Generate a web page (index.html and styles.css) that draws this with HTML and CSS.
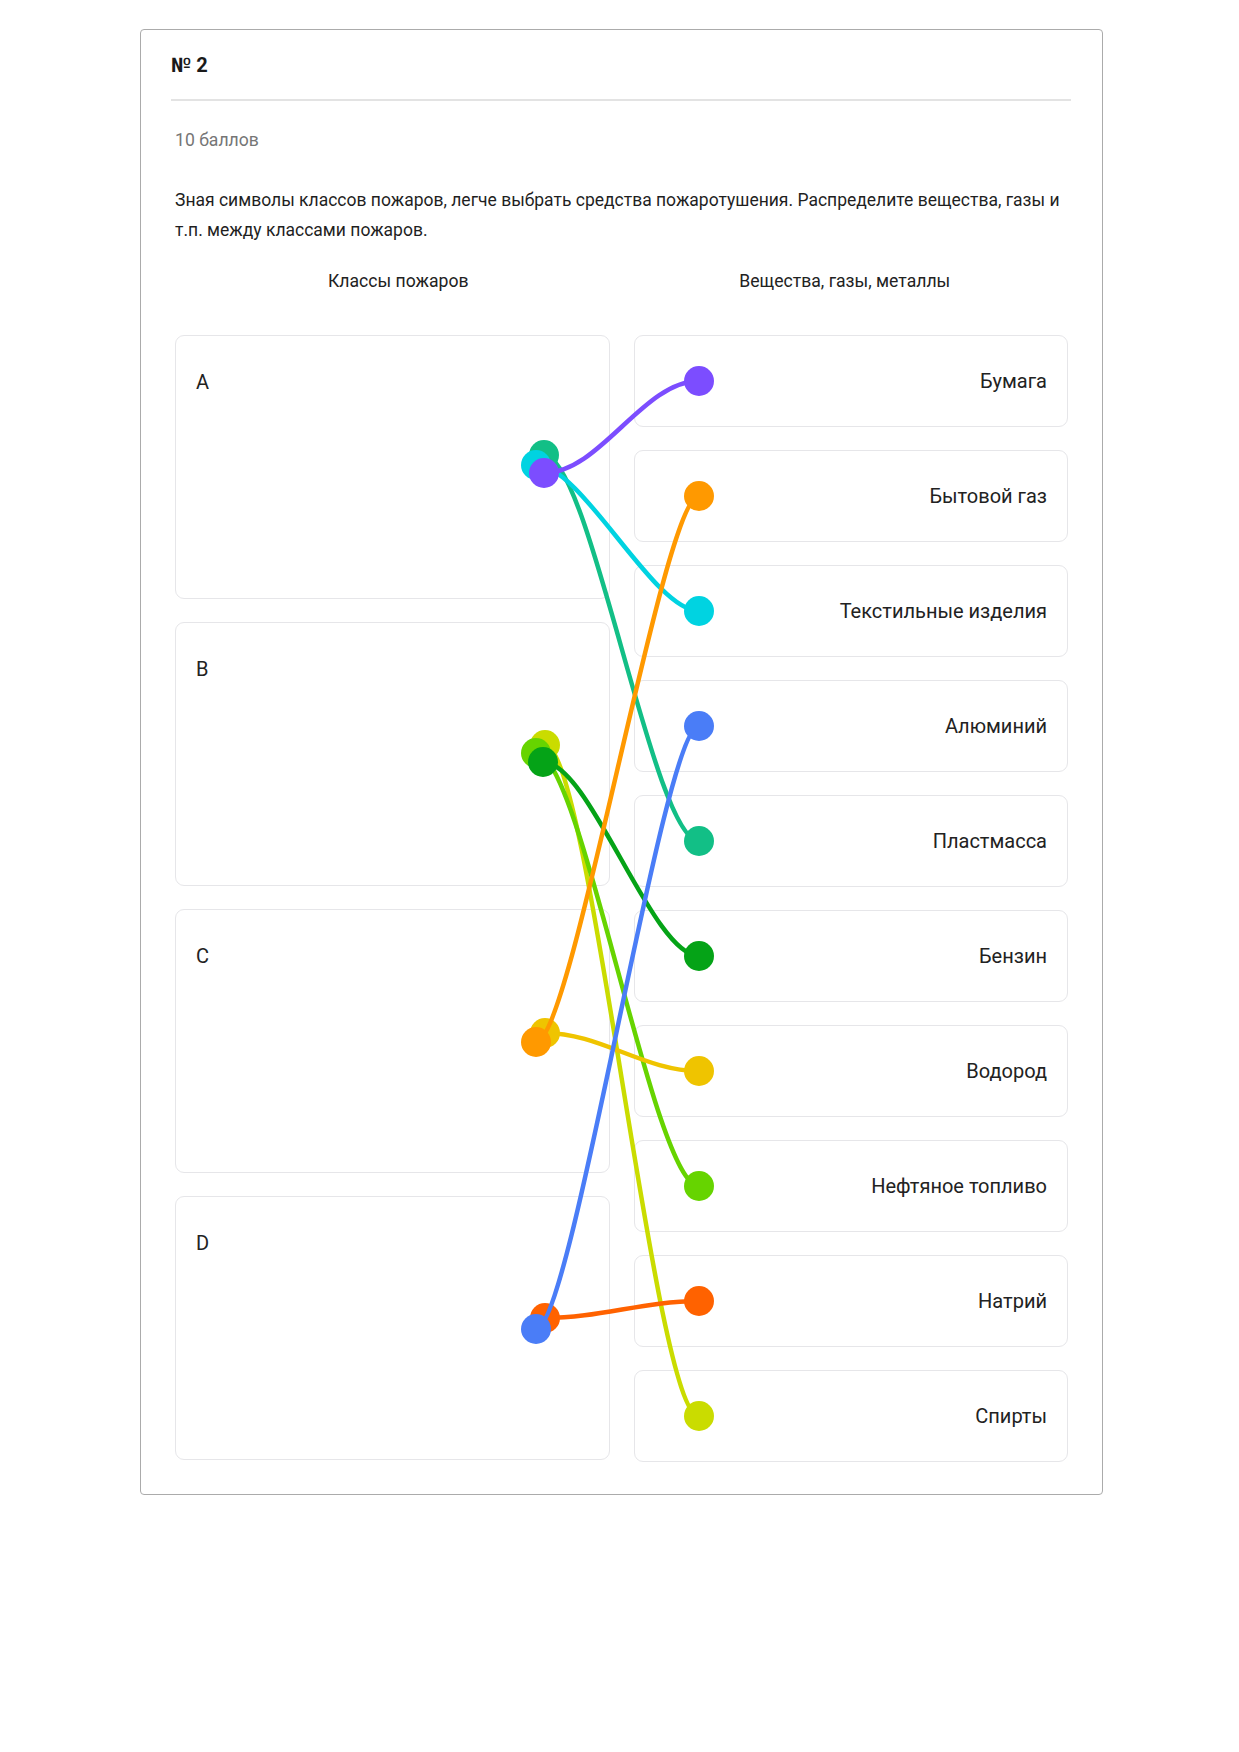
FILE: index.html
```html
<!DOCTYPE html>
<html lang="ru">
<head>
<meta charset="utf-8">
<title>№ 2</title>
<link rel="stylesheet" href="styles.css">
</head>
<body>
<div class="card">
  <div class="card-head">№ 2</div>
  <div class="card-body">
    <div class="points">10 баллов</div>
    <p class="question">Зная символы классов пожаров, легче выбрать средства пожаротушения. Распределите вещества, газы и т.п. между классами пожаров.</p>
    <div class="col-titles">
      <div class="col-title">Классы пожаров</div>
      <div class="col-title">Вещества, газы, металлы</div>
    </div>
    <div class="board">
      <div class="targets">
        <div class="target"><span class="target-label">A</span></div>
        <div class="target"><span class="target-label">B</span></div>
        <div class="target"><span class="target-label">C</span></div>
        <div class="target"><span class="target-label">D</span></div>
      </div>
      <div class="items">
        <div class="item">Бумага</div>
        <div class="item">Бытовой газ</div>
        <div class="item">Текстильные изделия</div>
        <div class="item">Алюминий</div>
        <div class="item">Пластмасса</div>
        <div class="item">Бензин</div>
        <div class="item">Водород</div>
        <div class="item">Нефтяное топливо</div>
        <div class="item">Натрий</div>
        <div class="item">Спирты</div>
      </div>
      <svg class="links" width="893" height="1127" viewBox="175 335 893 1127" xmlns="http://www.w3.org/2000/svg">
        <g stroke-width="4.5" fill="none" stroke-linecap="round">
          <!-- A -->
          <path d="M544 455 C 590 455, 653 841, 699 841" stroke="#12bf86"/>
          <circle cx="699" cy="841" r="15" fill="#12bf86" stroke="none"/>
          <circle cx="544" cy="455" r="15" fill="#12bf86" stroke="none"/>
          <path d="M536 465 C 582 465, 653 611, 699 611" stroke="#00d3e1"/>
          <circle cx="699" cy="611" r="15" fill="#00d3e1" stroke="none"/>
          <circle cx="536" cy="465" r="15" fill="#00d3e1" stroke="none"/>
          <path d="M544 473 C 600 473, 643 381, 699 381" stroke="#7c4dff"/>
          <circle cx="699" cy="381" r="15" fill="#7c4dff" stroke="none"/>
          <circle cx="544" cy="473" r="15" fill="#7c4dff" stroke="none"/>
          <!-- B -->
          <path d="M545 745 C 590 745, 654 1416, 699 1416" stroke="#cadc00"/>
          <circle cx="699" cy="1416" r="15" fill="#cadc00" stroke="none"/>
          <circle cx="545" cy="745" r="15" fill="#cadc00" stroke="none"/>
          <path d="M536 753 C 582 753, 653 1186, 699 1186" stroke="#66d400"/>
          <circle cx="699" cy="1186" r="15" fill="#66d400" stroke="none"/>
          <circle cx="536" cy="753" r="15" fill="#66d400" stroke="none"/>
          <path d="M543 762 C 590 762, 652 956, 699 956" stroke="#05a317"/>
          <circle cx="699" cy="956" r="15" fill="#05a317" stroke="none"/>
          <circle cx="543" cy="762" r="15" fill="#05a317" stroke="none"/>
          <!-- C -->
          <path d="M545 1033 C 600 1033, 644 1071, 699 1071" stroke="#efc400"/>
          <circle cx="699" cy="1071" r="15" fill="#efc400" stroke="none"/>
          <circle cx="545" cy="1033" r="15" fill="#efc400" stroke="none"/>
          <path d="M536 1042 C 572 1042, 663 496, 699 496" stroke="#ff9900"/>
          <circle cx="699" cy="496" r="15" fill="#ff9900" stroke="none"/>
          <circle cx="536" cy="1042" r="15" fill="#ff9900" stroke="none"/>
          <!-- D -->
          <path d="M545 1318 C 600 1318, 644 1301, 699 1301" stroke="#ff6200"/>
          <circle cx="699" cy="1301" r="15" fill="#ff6200" stroke="none"/>
          <circle cx="545" cy="1318" r="15" fill="#ff6200" stroke="none"/>
          <path d="M536 1329 C 572 1329, 663 726, 699 726" stroke="#4a7df7"/>
          <circle cx="699" cy="726" r="15" fill="#4a7df7" stroke="none"/>
          <circle cx="536" cy="1329" r="15" fill="#4a7df7" stroke="none"/>
        </g>
      </svg>
    </div>
  </div>
</div>
</body>
</html>
```

FILE: styles.css
```css
html, body {
  margin: 0;
  padding: 0;
  background: #ffffff;
}

body {
  font-family: Roboto, "Noto Sans", "Liberation Sans", sans-serif;
  color: #212121;
}

.card {
  box-sizing: border-box;
  width: 963px;
  margin: 29px 0 40px 140px;
  border: 1px solid #ababab;
  border-radius: 4px;
  padding: 0 31px 32px 30px;
}

.card-head {
  height: 69px;
  display: flex;
  align-items: center;
  font-size: 20px;
  font-weight: 700;
  color: #1a1a1a;
  border-bottom: 2px solid #e3e3e3;
}

.card-body {
  padding: 0 3px 0 4px;
}

.points {
  margin-top: 27px;
  font-size: 17.6px;
  line-height: 24px;
  color: #767676;
}

.question {
  margin: 33px 0 0;
  font-size: 17.5px;
  line-height: 30px;
  color: #1f1f1f;
}

.col-titles {
  display: grid;
  grid-template-columns: 1fr 1fr;
  margin-top: 24px;
}

.col-title {
  text-align: center;
  font-size: 17.6px;
  line-height: 24px;
  color: #222222;
}

.board {
  position: relative;
  display: grid;
  grid-template-columns: 1fr 1fr;
  column-gap: 24px;
  margin-top: 42px;
}

.targets,
.items {
  display: flex;
  flex-direction: column;
  gap: 23px;
}

.target {
  box-sizing: border-box;
  height: 264px;
  border: 1px solid #e6e6e9;
  border-radius: 9px;
  padding: 33px 20px 0;
  font-size: 20px;
  line-height: 26px;
  color: #222222;
}

.item {
  box-sizing: border-box;
  height: 92px;
  border: 1px solid #e6e6e9;
  border-radius: 9px;
  padding: 0 20px;
  display: flex;
  align-items: center;
  justify-content: flex-end;
  font-size: 20px;
  color: #222222;
}

.links {
  position: absolute;
  left: 0;
  top: 0;
  overflow: visible;
  pointer-events: none;
}
```
